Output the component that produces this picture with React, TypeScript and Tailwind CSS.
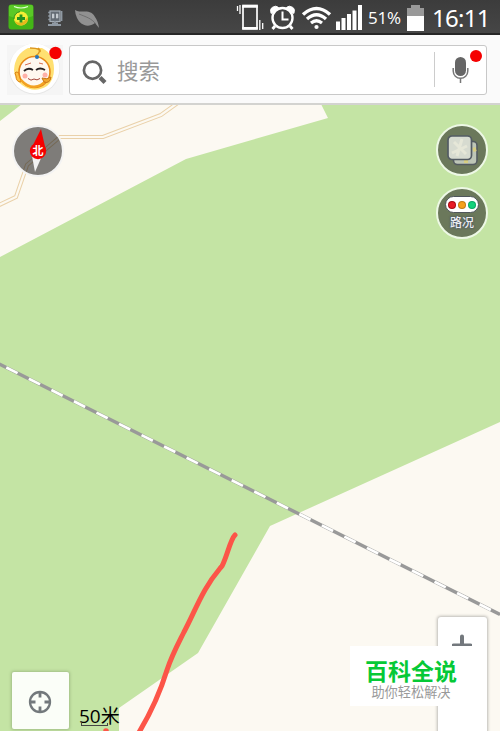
import React from 'react';

const StatusBar: React.FC = () => (
  <header className="flex h-[35px] items-center border-b-2 border-[#262626] bg-gradient-to-b from-[#3c3c3c] to-[#464646] pl-2 pr-2 text-white">
    <svg className="mt-px h-[26px] w-[26px] shrink-0" viewBox="0 0 26 26">
      <rect x="0.5" y="0.5" width="25" height="25" rx="3" fill="#43b516" />
      <path d="M1 3 Q1 1 3 1 H23 Q25 1 25 3 V12 Q13 17 1 12Z" fill="#5ac926" />
      <path d="M6 2.500 Q13 5.500 20 2.500" fill="none" stroke="#e4ffd3" strokeWidth="1.200" />
      <circle cx="13" cy="14.500" r="7" fill="#f4ee35" />
      <path d="M6.500 17 Q14 22 19.500 13 Q21 19 15.500 21 Q9 23 6.500 17Z" fill="#e5b81c" />
      <path d="M6 15 Q6 9 12 7.600" fill="none" stroke="#258c1c" />
      <path d="M13 10.500v8M9 14.500h8" stroke="#249321" strokeWidth="2.800" />
    </svg>
    <svg className="ml-[13px] mt-1 h-[18px] w-4 shrink-0" viewBox="0 0 16 18">
      <path d="M1 2.500h4M1 6h4M1 9.500h4" stroke="#7c858e" strokeWidth="1.400" />
      <rect x="3" y="1" width="10" height="10.500" fill="#646c75" stroke="#a3acb5" strokeWidth="1.200" />
      <path d="M5 4h2v4H5M9 4h2v4H9" fill="#c5cbd1" stroke="#c5cbd1" strokeWidth="0.600" />
      <path d="M14.500 1v10M8 11v4M1 15h13M5 13.500h6" stroke="#8f99a3" strokeWidth="1.800" />
    </svg>
    <svg className="ml-[11px] mt-1 h-5 w-[28px] shrink-0" viewBox="0 0 28 20">
      <path d="M1 1 C8 5 16 -1 21 8 Q24 12 25 19 L21 14 C13 20 6 15 3 9 Q1 4 1 1Z" fill="#919191" />
      <path d="M5 5 C12 8 17 9 22 15" fill="none" stroke="#666" strokeWidth="0.800" />
    </svg>
    <svg className="ml-[134px] h-7 w-[29px] shrink-0" viewBox="0 0 29 28" fill="none" stroke="#fff">
      <rect x="7" y="2.500" width="14" height="23.500" strokeWidth="1.700" />
      <path d="M6.200 3.600h15.600M6.200 25h15.600" strokeWidth="2.200" />
      <path d="M1.500 3v5M4 2v9M23.800 17v10M26.700 20v6" strokeWidth="1.300" />
    </svg>
    <svg className="ml-1 mt-px h-[27px] w-[27px] shrink-0" viewBox="0 0 27 27" fill="none" stroke="#fff">
      <circle cx="13.500" cy="14" r="10" strokeWidth="2.400" />
      <path d="M2.200 9.500 Q0.500 5 3.500 3.300 Q7 1 9.500 3.500ZM17.500 3.500 Q20 1 23.500 3.300 Q26.500 5 24.800 9.500Z" fill="#fff" strokeWidth="1" />
      <path d="M6 22l-2.500 3M21 22l2.500 3" strokeWidth="2.800" />
      <path d="M13.500 7.500v8h6" strokeWidth="2" />
    </svg>
    <svg className="ml-[5px] mt-0.5 h-[25px] w-[31px] shrink-0" viewBox="0 0 31 25" fill="none" stroke="#fff">
      <path d="M2 9.500 Q15.500 -2.500 29 9.500" strokeWidth="3.500" />
      <path d="M6 14 Q15.500 5.500 25 14" strokeWidth="3.400" />
      <path d="M10 18 Q15.500 13.500 21 18" strokeWidth="3.200" />
      <circle cx="15.500" cy="22" r="2.100" fill="#fff" stroke="none" />
    </svg>
    <svg className="ml-[3px] h-[27px] w-7 shrink-0" viewBox="0 0 28 27" fill="#fff">
      <path d="M1 18.500h4v8.500h-4zM6.500 15h4v12h-4zM12 11h4v16h-4zM17.500 7.500h4V27h-4zM23 2h4V27h-4z" />
    </svg>
    <span className="ml-[5px] mt-0.5 w-[34px] whitespace-nowrap font-['Open_Sans','Noto_Sans',sans-serif] text-[17px] leading-8 tracking-[-0.2px]">51%</span>
    <svg className="ml-[5px] mt-0.5 h-[26px] w-[17px] shrink-0" viewBox="0 0 17 26">
      <path d="M0 3h4V0h9v3h4v9H0z" fill="#999" />
      <path d="M0 11h17v15H0z" fill="#fff" />
    </svg>
    <span className="ml-[8px] mt-0.5 whitespace-nowrap font-['Noto_Sans','Open_Sans',sans-serif] text-[24px] leading-8 tracking-[-0.7px]">16:11</span>
  </header>
);

const Avatar: React.FC = () => (
  <svg className="mt-0.5 h-[52px] w-[56px] shrink-0" viewBox="0 0 56 52">
    <path d="M0 1h56v50H0z" fill="#f5f5f5" />
    <circle cx="27.500" cy="25" r="25.500" fill="#e6e6e6" />
    <circle cx="27.500" cy="24.500" r="25" fill="#fff" />
    <path d="M7 26 Q8 10 21 4 H35 Q47 10 47 25 Q47 36 40 42 Q27 50 15 41 Q7 35 7 26Z" fill="#ffe071" />
    <path d="M9 32 Q7 28 9 28 Q12 27 13 32 L14 38 Q9 38 9 32" fill="#ffc345" stroke="#db8418" />
    <path d="M23 4 Q36 4 31 10 Q25 13 32 19M31 4 Q34 6 33 8" fill="none" stroke="#dc961e" strokeWidth="1.300" />
    <circle cx="27.500" cy="28" r="15.500" fill="#fff8ef" stroke="#e88918" strokeWidth="1.600" />
    <path d="M14 36 Q27 50 41 35" fill="none" stroke="#f3a323" strokeWidth="2.500" />
    <circle cx="30" cy="13" r="2" fill="#2675bb" />
    <path d="M18 21l6-2M32 19l4 1" stroke="#d66d51" />
    <path d="M17 27q4-4 9-1M29 26q4-3 9 0" fill="none" stroke="#292323" strokeWidth="1.800" />
    <circle cx="18" cy="32" r="2.500" fill="#ffb1a8" />
    <circle cx="38" cy="31" r="2.500" fill="#ffb1a8" />
    <path d="M21 34.500 q3 3 6 0.500 q3 2 6-0.500" fill="none" stroke="#a44438" />
    <path d="M35 34 Q40 36 44 33 Q43 40 37 38Z" fill="#f2a82d" stroke="#c97516" />
    <circle cx="48.500" cy="9" r="6.200" fill="#f50000" />
  </svg>
);

const SearchBar: React.FC = () => (
  <div className="flex h-[70px] items-center gap-[6px] border-b-2 border-[#d3d3d0] bg-[#fafafa] pl-[7px] pr-[13px]">
    <Avatar />
    <div className="relative mt-px flex h-[50px] flex-1 items-center rounded-[3px] border border-[#c8c8c8] bg-white pl-3">
      <svg className="mt-1 h-6 w-[25px] shrink-0" viewBox="0 0 25 24" fill="none" stroke="#666">
        <circle cx="10.500" cy="10.200" r="8.600" strokeWidth="2.700" />
        <path d="M18 17.500l5 5" strokeWidth="4.200" />
      </svg>
      <span className="ml-[10px] mt-px font-['Noto_Sans_CJK_SC',sans-serif] text-[21.5px] leading-8 text-[#999]">搜索</span>
      <span className="ml-auto h-[35px] w-px bg-[#ccc]" />
      <svg className="ml-[17px] mr-[17px] h-[27px] w-[17px] shrink-0" viewBox="0 0 17 27">
        <rect x="3" y="1" width="11" height="19" rx="5.500" fill="#666" />
        <path d="M1.200 12v3a7.300 7.300 0 0 0 14.600 0v-3" fill="none" stroke="#777" strokeWidth="1.500" />
        <path d="M8.500 22v5" stroke="#777" strokeWidth="1.500" />
      </svg>
      <span className="absolute right-[4px] top-[4px] h-3 w-3 rounded-full bg-[#f50000]" />
    </div>
  </div>
);

const MapCanvas: React.FC = () => (
  <svg className="block h-full w-full" viewBox="0 105 500 626" fill="none">
    <rect y="104" width="500" height="627" fill="#fcf9f2" />
    <path d="M0 104H22L0 121ZM0 257L186 159L328 118L321 104H500V422L270 526L198 653L119 708V731H0Z" fill="#c4e4a4" />
    <path d="M-2 205.500L16 197L27 165L60 137H103L161 115L179 102" stroke="#ead1a9" strokeWidth="4.200" />
    <path d="M-2 205.500L16 197L27 165L60 137H103L161 115L179 102" stroke="#fcf9f2" strokeWidth="2.200" />
    <path d="M-4.700 362L500 614.500" stroke="#999" strokeWidth="3.400" />
    <path d="M6.300 367.500L500 614.500" stroke="#fff" strokeWidth="2.700" strokeDasharray="12.600 12.600" />
    <path d="M235 535C230 540 227 557 222 566C218 571 213 576 205 590C197 604 191 619 184 632C177 646 172 655 167 670C159 696 149 716 138 734" stroke="#fc5548" strokeWidth="5" strokeLinecap="round" />
    <circle cx="106" cy="731" r="2.800" fill="#fc5548" />
  </svg>
);

const Compass: React.FC = () => (
  <div className="absolute left-[12px] top-[20px] h-[52px] w-[52px] rounded-full border-2 border-white/90 bg-black/50">
    <svg className="h-full w-full" viewBox="14 127 48 48">
      <path d="M41 129L31 149L46 151Z" fill="#f50000" />
      <path d="M32 156H42L35 172Z" fill="#f1f1f1" />
      <circle cx="38" cy="151" r="8.200" fill="#f50000" />
      <text x="38" y="155" textAnchor="middle" fill="#fff" fontSize="11" fontWeight="700" fontFamily="Noto Sans CJK SC, sans-serif">北</text>
    </svg>
  </div>
);

const LayerButton: React.FC = () => (
  <button className="flex h-[52px] w-[52px] items-center justify-center rounded-full border-2 border-[#edf8e5] bg-[#6b785b]">
    <svg className="h-[31px] w-[31px]" viewBox="0 0 31 31">
      <rect x="6.500" y="6.500" width="23.500" height="23" rx="4" fill="#bec6b7" stroke="#545b60" strokeWidth="1.600" />
      <path d="M19 28v-5M26 15l3-1" stroke="#d8ce82" strokeWidth="4" />
      <rect x="1" y="1" width="23.500" height="23.500" rx="4" fill="#d7dbd0" />
      <path d="M7 7l12 12M5 18l15-7M15 4l-5 17" stroke="#e6e7d8" strokeWidth="3" />
      <rect x="1" y="1" width="23.500" height="23.500" rx="4" fill="none" stroke="#545c64" strokeWidth="1.700" />
    </svg>
  </button>
);

const TrafficButton: React.FC = () => (
  <button className="flex h-[52px] w-[52px] flex-col items-center rounded-full border-2 border-[#edf8e5] bg-[#6b785b] pt-[7px]">
    <span className="flex h-[17px] w-[34px] shrink-0 items-center justify-center gap-[4px] rounded-full border border-[#4f565b] bg-white">
      <i className="h-[6px] w-[6px] rounded-full bg-[#e81b25] ring-1 ring-[#a80910]" />
      <i className="h-[6px] w-[6px] rounded-full bg-[#f5a11b] ring-1 ring-[#c37b11]" />
      <i className="h-[6px] w-[6px] rounded-full bg-[#13d17b] ring-1 ring-[#08a763]" />
    </span>
    <span className="font-['Noto_Sans_CJK_SC',sans-serif] text-xs font-medium leading-[17px] text-[#eceef0] [text-shadow:0_0_2px_#465064,0_0_2px_#465064]">路况</span>
  </button>
);

const App: React.FC = () => {
  return (
    <div className="flex h-[731px] w-[500px] flex-col overflow-hidden bg-[#fcf9f2]">
      <StatusBar />
      <SearchBar />
      <main className="relative h-[626px] overflow-hidden">
        <MapCanvas />
        <Compass />
        <div className="absolute right-3 top-[19px] flex flex-col gap-[11px]">
          <LayerButton />
          <TrafficButton />
        </div>

        {/* Zoom control */}
        <div className="absolute left-[438px] top-[512px] flex h-[118px] w-[49px] justify-center rounded-[3px] bg-white pt-[17px] shadow-[0_0_3px_1px_#bcbab5]">
          <svg className="ml-[-1px] h-5 w-5" viewBox="0 0 20 20">
            <path d="M10 2.500v16M1.500 11.500h17" stroke="#73787d" strokeWidth="4" strokeLinecap="round" />
          </svg>
        </div>

        {/* Locate button and scale */}
        <button className="absolute left-[12px] top-[567px] flex h-[57px] w-[57px] items-center justify-center rounded-[2px] bg-[#fbfef8] shadow-[0_0_3px_1px_#a1bd86]">
          <svg className="ml-[-2px] mt-[2px] h-6 w-6" viewBox="0 0 24 24" fill="none" stroke="#73797c" strokeWidth="2.300">
            <circle cx="12" cy="12" r="10" />
            <path d="M12 2v5.500M12 16.500V22M2 12h5.500M16.500 12H22" strokeWidth="2.800" />
          </svg>
        </button>
        <div className="absolute left-[79px] top-[600px] whitespace-nowrap font-['Open_Sans','Noto_Sans_CJK_SC',sans-serif] text-[19px] leading-[22px] text-black">
          50米
          <span className="absolute left-[2px] top-[18px] h-[3px] w-[27px] border-x border-b border-[#444]" />
        </div>

        <div className="absolute left-[350px] top-[541px] flex h-[60px] w-[125px] flex-col items-center bg-white pr-[3px] pt-[8px] font-['Noto_Sans_CJK_SC',sans-serif]">
          <strong className="whitespace-nowrap text-[23px] font-bold leading-[33px] text-[#06c936]">百科全说</strong>
          <span className="whitespace-nowrap text-[13.2px] leading-[10px] text-[#999]">助你轻松解决</span>
        </div>
      </main>
    </div>
  );
};

export default App;
